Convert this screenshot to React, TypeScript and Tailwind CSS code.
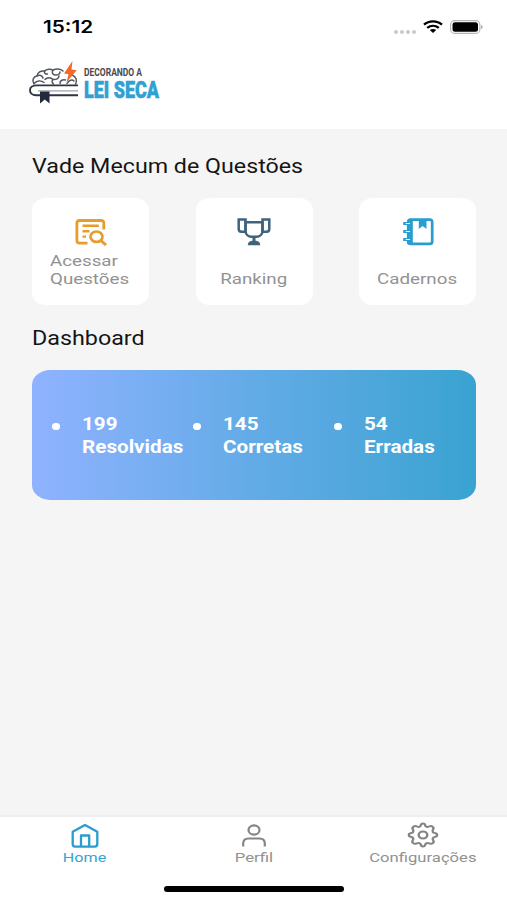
import type { ReactNode } from "react";

type Shortcut = {
  id: string;
  label: ReactNode;
  icon: ReactNode;
  labelClass: string;
};

type Stat = {
  value: number;
  label: string;
};

const stats: Stat[] = [
  { value: 199, label: "Resolvidas" },
  { value: 145, label: "Corretas" },
  { value: 54, label: "Erradas" },
];

const shortcuts: Shortcut[] = [
  {
    id: "questoes",
    label: (
      <>
        Acessar
        <br />
        Questões
      </>
    ),
    icon: <QuestionsIcon />,
    labelClass: "mt-[6px] w-[81px] origin-left",
  },
  {
    id: "ranking",
    label: "Ranking",
    icon: <TrophyIcon />,
    labelClass: "mt-[24px] origin-center",
  },
  {
    id: "cadernos",
    label: "Cadernos",
    icon: <NotebookIcon />,
    labelClass: "mt-[24px] origin-center",
  },
];

function Logo() {
  return (
    <svg width="132" height="48" viewBox="0 0 132 48" fill="none" className="overflow-visible">
      <g stroke="#51565f" strokeWidth="1.500" strokeLinecap="round" strokeLinejoin="round">
        <path d="M5 26C2.500 22.500 4.500 18.500 8 18C8.500 14.500 12 12.300 15.500 13.100C17.600 11 21.500 10.500 24 12.200C27 10.300 31.500 10.500 34 13" />
        <path d="M43 17C47 18.500 48.500 22.500 46.700 26" />
        <path d="M8 18C10.500 16.500 13.500 17.500 14 20M15.500 13.100C15 15 16.500 16.500 18.500 16" />
        <path d="M24 12.200C22.500 14.500 23.500 16.500 26 17C29 17.500 31 16 31 14" />
        <path d="M5 25.500C8 22.500 12 22 15 24.500M16 21.500C18 19 22 19 24 21.500C22.500 23 23 25 24.500 26" />
        <path d="M24 21.500C27 22 30 20.500 30 18M31 25.500C31 22.500 34 21 36.500 22M38 25.500C40 21.500 43.500 21.500 45 23" />
      </g>
      <path d="M49 27.400H7.500C3.300 27.400 1 29.600 1 32.200C1 35.200 3.500 37.200 7 37.200H12M19 37.200H49" stroke="#2f3442" strokeWidth="1.900" />
      <path d="M9 32.900H49" stroke="#858a92" strokeWidth="1" />
      <path d="M11 33.500H20.500V45.500L15.800 41.500L11 45.500Z" fill="#242a3d" />
      <path d="M43.500 3L35 15.500L39.500 16.200L37.500 24.500L47.700 12.300L42.500 11.500Z" fill="#f3692b" />
      <text x="55" y="17.700" textLength="58" lengthAdjust="spacingAndGlyphs" fill="#48494d" className="font-['Roboto'] text-[11.5px] font-bold">
        DECORANDO A
      </text>
      <text x="55" y="39.500" textLength="75" lengthAdjust="spacingAndGlyphs" fill="#31a0d3" stroke="#31a0d3" strokeWidth="0.6" className="font-['Roboto'] text-[24px] font-black">
        LEI SECA
      </text>
    </svg>
  );
}

function WifiIcon() {
  return (
    <svg width="20" height="14" viewBox="0 0 20 14" fill="none" stroke="#000" strokeWidth="2.300">
      <path d="M1 4.700C6 .200 14 .200 19 4.700M4.200 7.900C7.600 5.100 12.400 5.100 15.800 7.900" />
      <path d="M6.800 10.100C8.700 8.600 11.300 8.600 13.200 10.100L10 12.900Z" fill="#000" stroke="none" />
    </svg>
  );
}

function BatteryIcon() {
  return (
    <svg width="34" height="14" viewBox="0 0 34 14">
      <rect x=".6" y=".6" width="29.300" height="12.800" rx="4" fill="none" stroke="#b5b5b5" strokeWidth="1.100" />
      <rect x="2.500" y="2.200" width="25.500" height="9.600" rx="2.500" fill="#000" />
      <path d="M31.200 5V9C33 8.200 33 5.800 31.200 5Z" fill="#999" />
    </svg>
  );
}

function QuestionsIcon() {
  return (
    <svg width="32" height="28" viewBox="0 0 32 28" fill="none" stroke="#e79d2b" strokeWidth="2.800">
      <path d="M12.500 25.200H4.500Q1.900 25.200 1.900 22.500V4.900Q1.900 2.500 4.500 2.500H26Q28.800 2.500 28.800 4.900V11.500" />
      <path d="M7.500 7.700H23.800M7.500 13.200H14.500M7.500 18.600H11" strokeWidth="2.400" />
      <ellipse cx="21.500" cy="18.700" rx="6" ry="5.200" strokeWidth="2.700" />
      <path d="M25.700 22.300L31 27" strokeWidth="3" />
    </svg>
  );
}

function TrophyIcon() {
  return (
    <svg width="34" height="28" viewBox="0 0 34 28" fill="none" stroke="#3f627d" strokeWidth="2.500">
      <path d="M8.500 4.300H25.500V12.500C25.500 16.500 22.500 18.700 19.500 18.700H14.500C11.500 18.700 8.500 16.500 8.500 12.500Z" />
      <path d="M8.500 1.600H1.700V11Q1.700 13.700 4.300 13.700H8.500V1.600ZM25.500 1.600H32.300V11Q32.300 13.700 29.700 13.700H25.500V1.600Z" />
      <path d="M17 19V23.500" strokeWidth="3" />
      <path d="M10.700 27.200Q11 23 15 22.700H19Q23 23 23.300 27.200Z" fill="#3f627d" stroke="none" />
    </svg>
  );
}

function NotebookIcon() {
  return (
    <svg width="32" height="28" viewBox="0 0 32 28" fill="none" stroke="#299dd0" strokeWidth="2.700">
      <rect x="6.200" y="1.600" width="24" height="24.300" rx="2.500" />
      <path d="M8.300 1.600V25.900" strokeWidth="5" />
      <path d="M1.200 5.500H8M1.200 13.500H8M1.200 21.500H8" strokeWidth="3.200" />
      <path d="M3.700 5.500H8M3.700 13.500H8M3.700 21.500H8" stroke="#fff" strokeWidth="1.200" />
      <path d="M16.800 2H24.500V11L20.600 8L16.800 11Z" fill="#299dd0" stroke="none" />
    </svg>
  );
}

function HomeIcon() {
  return (
    <svg width="28" height="25" viewBox="0 0 28 25" fill="none" stroke="#299dd0" strokeWidth="2.300" strokeLinejoin="round">
      <path d="M1.700 8.700L14 1.900L26.300 8.700V21Q26.300 23.600 23.800 23.600H4.200Q1.700 23.600 1.700 21Z" />
      <path d="M10 23.600V12.500H18.200V23.600" />
    </svg>
  );
}

function ProfileIcon() {
  return (
    <svg width="26" height="25" viewBox="0 0 26 25" fill="none" stroke="#858585" strokeWidth="2.200">
      <ellipse cx="13" cy="7" rx="5.500" ry="4.600" />
      <path d="M2.200 23.500V20.500Q2.200 15.500 7.500 15.500H18.500Q23.800 15.500 23.800 20.500V23.500" />
    </svg>
  );
}

function SettingsIcon() {
  return (
    <svg width="32" height="26" viewBox="0 0 24 24" preserveAspectRatio="none" fill="none" stroke="#858585" strokeWidth="1.800" strokeLinejoin="round">
      <path d="M10.300 3.200C10.700.900 13.300.900 13.700 3.200C13.900 4.500 15.300 5 16.400 4.200C18.500 2.800 20.700 5 19.500 7C18.900 8.500 19.400 9.900 20.800 10.200C23.200 10.700 23.200 13.300 20.800 13.800C19.400 14.100 18.900 15.500 19.600 16.700C20.800 19 18.800 21 16.700 19.700C15.300 18.900 13.900 19.500 13.700 20.800C13.300 23.100 10.700 23.100 10.300 20.800C10.100 19.500 8.700 18.900 7.300 19.700C5.200 21 3.200 19 4.400 16.700C5.100 15.500 4.600 14.100 3.200 13.800C.8 13.300.8 10.700 3.200 10.200C4.600 9.900 5.100 8.500 4.500 7C3.300 5 5.500 2.800 7.600 4.200C8.700 5 10.100 4.500 10.300 3.200Z" />
      <circle cx="12" cy="12" r="3.200" />
    </svg>
  );
}

export default function App() {
  return (
    <div className="flex h-[900px] w-[507px] flex-col overflow-hidden bg-[#f5f5f5] font-['Roboto',sans-serif]">
      <header className="h-[129px] shrink-0 bg-white">
        <div className="flex h-[58px] items-start justify-between pt-[16px] pr-[23px] pl-[43px]">
          <span className="inline-block origin-left scale-x-[1.22] font-['Inter',sans-serif] text-[17px] leading-[22px] font-semibold text-black">
            15:12
          </span>
          <div className="flex items-center pt-[4px]">
            <div className="mt-[9px] mr-[7px] flex gap-[2px]">
              <i className="h-[4px] w-[4px] rounded-full bg-[#c9c9c9]" />
              <i className="h-[4px] w-[4px] rounded-full bg-[#c9c9c9]" />
              <i className="h-[4px] w-[4px] rounded-full bg-[#c9c9c9]" />
              <i className="h-[4px] w-[4px] rounded-full bg-[#c9c9c9]" />
            </div>
            <WifiIcon />
            <div className="ml-[7px]">
              <BatteryIcon />
            </div>
          </div>
        </div>
        <div className="pl-[29px]">
          <Logo />
        </div>
      </header>

      <main className="flex-1 pt-[25px] pr-[31px] pl-[32px]">
        <h1 className="w-fit origin-left scale-x-[1.162] text-[20px] leading-6 whitespace-nowrap text-[#151515]">
          Vade Mecum de Questões
        </h1>

        <div className="mt-[20px] flex justify-between">
          {shortcuts.map((item) => (
            <button
              key={item.id}
              type="button"
              className="flex h-[107px] w-[117px] flex-col items-center rounded-[14px/12px] bg-white pt-[20px]"
            >
              {item.icon}
              <span
                className={`${item.labelClass} block scale-x-[1.21] text-left text-[15.5px] leading-[18px] whitespace-nowrap text-[#929292]`}
              >
                {item.label}
              </span>
            </button>
          ))}
        </div>

        <h2 className="mt-[21px] w-fit origin-left scale-x-[1.165] text-[20px] leading-6 text-[#151515]">
          Dashboard
        </h2>

        <section className="mt-[20px] flex h-[130px] rounded-[18px/15px] bg-linear-to-r from-[#8fb2ff] via-[#62abe7] to-[#38a3d1] pt-[43px] pl-[20px]">
          {stats.map((stat) => (
            <div key={stat.label} className="flex w-[141px] items-start">
              <span className="mt-[10px] mr-[22px] h-[7px] w-[8px] shrink-0 rounded-full bg-white" />
              <div className="origin-left scale-x-[1.18] text-[17.5px] leading-[23px] font-bold text-white">
                <div>{stat.value}</div>
                <div>{stat.label}</div>
              </div>
            </div>
          ))}
        </section>
      </main>

      <nav className="flex h-[85px] shrink-0 flex-col items-center border-t-2 border-[#eeeeee] bg-white">
        <div className="grid h-[69px] w-full grid-cols-3">
          <a className="flex flex-col items-center pt-[6px] text-[#36a3d3]">
            <HomeIcon />
            <span className="mt-[2px] scale-x-[1.24] text-[13px] leading-4">Home</span>
          </a>
          <a className="flex flex-col items-center pt-[6px] text-[#929292]">
            <ProfileIcon />
            <span className="mt-[2px] scale-x-[1.29] text-[13px] leading-4">Perfil</span>
          </a>
          <a className="flex flex-col items-center pt-[5px] text-[#929292]">
            <SettingsIcon />
            <span className="mt-[2px] scale-x-[1.28] text-[13px] leading-4">Configurações</span>
          </a>
        </div>
        <div className="h-[6px] w-[180px] rounded-full bg-black" />
      </nav>
    </div>
  );
}
